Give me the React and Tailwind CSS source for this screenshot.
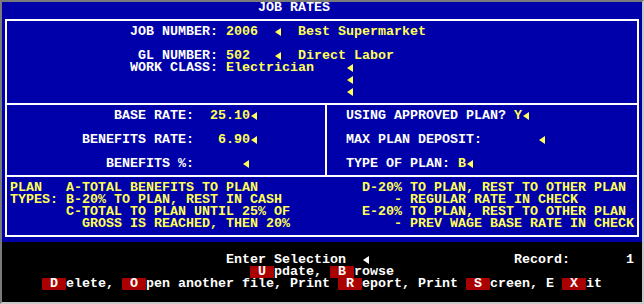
import React from "react";

// pantalla de modo texto: celdas de 8x12, 80 columnas x 25 filas

const Arrow = () => (
    <span className="inline-flex w-[8px] h-[12px] shrink-0">
        <svg width="8" height="12" viewBox="0 0 8 12">
            <polygon points="1,6 7,2 7,10" fill="#FFFF55" />
        </svg>
    </span>
);

const Row = ({ children, className = "" }) => (
    <div className={`flex h-[12px] leading-[12px] whitespace-pre ${className}`}>{children}</div>
);

const Y = ({ children }) => <span className="text-[#FFFF55]">{children}</span>;
const W = ({ children }) => <span className="text-white">{children}</span>;

const Key = ({ k }) => <span className="bg-[#AA0000] text-white">{` ${k} `}</span>;

export default function App() {
    return (
        <div className="w-[644px] h-[304px] border-2 border-t-[#7a7a7a] border-l-[#7a7a7a] border-r-[#c8c8c8] border-b-[#c8c8c8] bg-black font-['Liberation_Mono',monospace] font-bold text-[13.33px]">
            {/* Zona azul */}
            <div className="h-[240px] bg-[#0000AA] flex flex-col">
                <Row>
                    <W>{" ".repeat(32)}JOB RATES</W>
                </Row>

                <div className="mt-[5px] mx-[3px] border-2 border-white flex flex-col">
                    {/* Trabajo */}
                    <div className="pt-[5px] pb-[5px] pl-[3px]">
                        <Row>
                            <W>{" ".repeat(15)}JOB NUMBER: </W>
                            <Y>2006  </Y>
                            <Arrow />
                            <Y>  Best Supermarket</Y>
                        </Row>
                        <Row />
                        <Row>
                            <W>{" ".repeat(16)}GL NUMBER: </W>
                            <Y>502   </Y>
                            <Arrow />
                            <Y>  Direct Labor</Y>
                        </Row>
                        <Row>
                            <W>{" ".repeat(15)}WORK CLASS: </W>
                            <Y>Electrician    </Y>
                            <Arrow />
                        </Row>
                        <Row>
                            <span>{" ".repeat(42)}</span>
                            <Arrow />
                        </Row>
                        <Row>
                            <span>{" ".repeat(42)}</span>
                            <Arrow />
                        </Row>
                    </div>

                    {/* Tarifas */}
                    <div className="border-t-2 border-white flex">
                        <div className="w-[320px] border-r-2 border-white pt-[5px] pb-[5px] pl-[3px]">
                            <Row>
                                <W>{" ".repeat(13)}BASE RATE:  </W>
                                <Y>25.10</Y>
                                <Arrow />
                            </Row>
                            <Row />
                            <Row>
                                <W>{" ".repeat(9)}BENEFITS RATE:   </W>
                                <Y>6.90</Y>
                                <Arrow />
                            </Row>
                            <Row />
                            <Row>
                                <W>{" ".repeat(12)}BENEFITS %:      </W>
                                <Arrow />
                            </Row>
                        </div>
                        <div className="flex-1 pt-[5px] pl-[3px]">
                            <Row>
                                <W>  USING APPROVED PLAN? </W>
                                <Y>Y</Y>
                                <Arrow />
                            </Row>
                            <Row />
                            <Row>
                                <W>  MAX PLAN DEPOSIT:       </W>
                                <Arrow />
                            </Row>
                            <Row />
                            <Row>
                                <W>  TYPE OF PLAN: </W>
                                <Y>B</Y>
                                <Arrow />
                            </Row>
                        </div>
                    </div>

                    {/* Tipos de plan */}
                    <div className="border-t-2 border-white flex pt-[5px] pb-[5px] pl-[3px] text-[#FFFF55]">
                        <div className="w-[352px]">
                            <Row>PLAN   A-TOTAL BENEFITS TO PLAN</Row>
                            <Row>TYPES: B-20% TO PLAN, REST IN CASH</Row>
                            <Row>{"       C-TOTAL TO PLAN UNTIL 25% OF"}</Row>
                            <Row>{"         GROSS IS REACHED, THEN 20%"}</Row>
                        </div>
                        <div className="flex-1">
                            <Row>D-20% TO PLAN, REST TO OTHER PLAN</Row>
                            <Row>{"    - REGULAR RATE IN CHECK"}</Row>
                            <Row>E-20% TO PLAN, REST TO OTHER PLAN</Row>
                            <Row>{"    - PREV WAGE BASE RATE IN CHECK"}</Row>
                        </div>
                    </div>
                </div>
            </div>

            {/* Zona negra: menú */}
            <div className="h-[60px] flex flex-col text-white">
                <Row />
                <Row>
                    <span>{" ".repeat(28)}Enter Selection  </span>
                    <span className="inline-flex w-[8px] h-[12px] shrink-0">
                        <svg width="8" height="12" viewBox="0 0 8 12">
                            <polygon points="1,6 7,2 7,10" fill="#FFFFFF" />
                        </svg>
                    </span>
                    <span>{" ".repeat(18)}Record:{" ".repeat(7)}1</span>
                </Row>
                <Row>
                    <span>{" ".repeat(31)}</span>
                    <Key k="U" />
                    <span>pdate, </span>
                    <Key k="B" />
                    <span>rowse</span>
                </Row>
                <Row>
                    <span>{"     "}</span>
                    <Key k="D" />
                    <span>elete, </span>
                    <Key k="O" />
                    <span>pen another file, Print </span>
                    <Key k="R" />
                    <span>eport, Print </span>
                    <Key k="S" />
                    <span>creen, E </span>
                    <Key k="X" />
                    <span>it</span>
                </Row>
                <Row />
            </div>
        </div>
    );
}
